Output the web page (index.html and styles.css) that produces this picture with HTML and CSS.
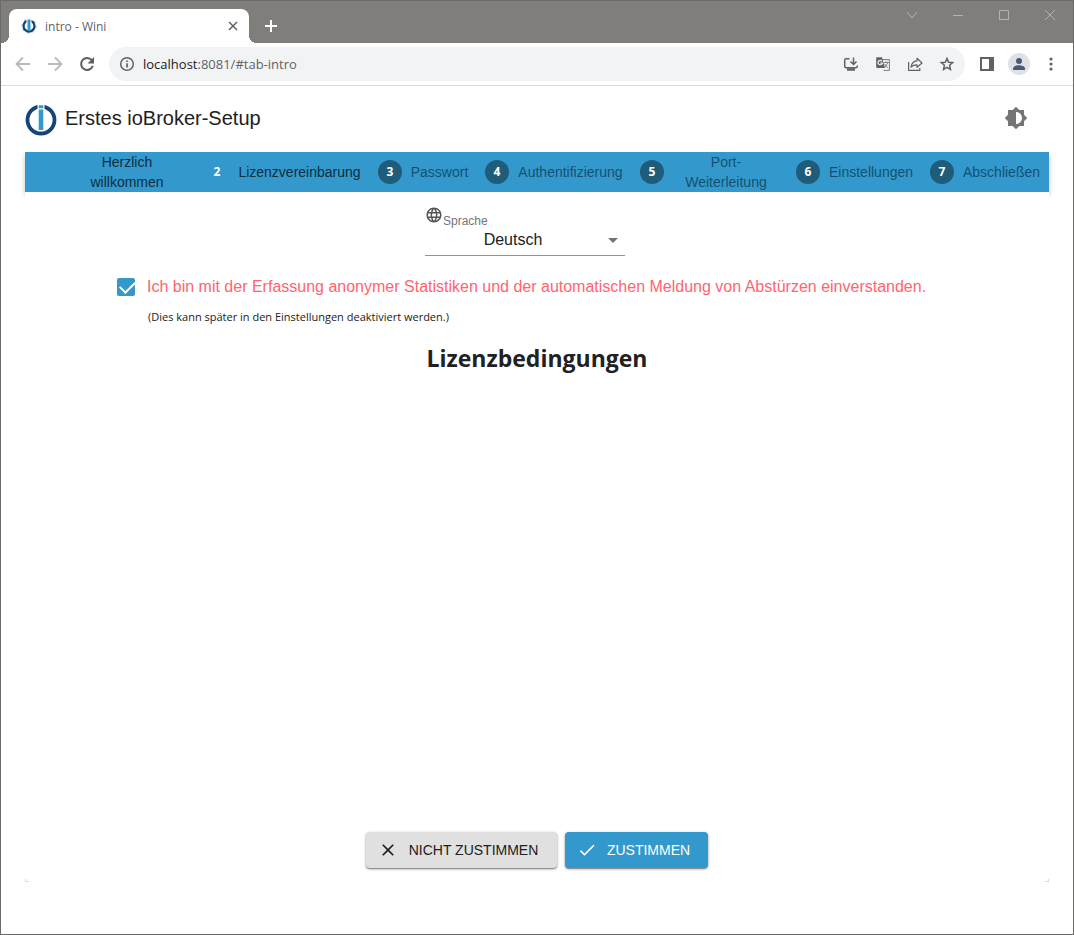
FILE: index.html
```html
<!DOCTYPE html>
<html lang="de">
<head>
<meta charset="utf-8">
<title>intro - Wini</title>
<link rel="stylesheet" href="styles.css">
</head>
<body>
<div class="window">
  <header class="tabstrip">
    <div class="tab">
      <svg class="tab-logo" width="16" height="16" viewBox="0 0 32 32"><circle cx="16" cy="16" r="14" fill="none" stroke="#c3ccd4" stroke-width="3" stroke-dasharray="4 7"/><circle cx="16" cy="16" r="11" fill="#fff" stroke="#164477" stroke-width="4.500"/><path d="M11 1h10v9H11z" fill="#fff"/><path d="M13 3h6v23h-6z" fill="#3399cc"/></svg>
      <span class="tab-title">intro - Wini</span>
      <button class="plain" aria-label="Tab schließen"><svg width="16" height="16" viewBox="0 0 16 16"><path d="M4 4l8 8M12 4l-8 8" stroke="#5f6368" stroke-width="1.500"/></svg></button>
    </div>
    <button class="plain new-tab" aria-label="Neuer Tab"><svg width="16" height="16" viewBox="0 0 16 16"><path d="M8 2v12M2 8h12" stroke="#fff" stroke-width="2"/></svg></button>
    <div class="window-controls">
      <button class="plain" aria-label="Tabs suchen"><svg width="12" height="12" viewBox="0 0 12 12"><path d="M1 3l5 6 5-6"/></svg></button>
      <button class="plain" aria-label="Minimieren"><svg width="12" height="12" viewBox="0 0 12 12"><path d="M1 6.500h10"/></svg></button>
      <button class="plain" aria-label="Maximieren"><svg width="12" height="12" viewBox="0 0 12 12"><path d="M1.500 1.500h9v9h-9z"/></svg></button>
      <button class="plain" aria-label="Schließen"><svg width="12" height="12" viewBox="0 0 12 12"><path d="M1 1l10 10M11 1L1 11"/></svg></button>
    </div>
  </header>

  <nav class="toolbar">
    <button class="plain" aria-label="Zurück"><svg width="16" height="16" viewBox="0 0 16 16" fill="none" stroke="#bababa" stroke-width="1.800"><path d="M15 8H2M8 1.500L1.500 8 8 14.500"/></svg></button>
    <button class="plain" aria-label="Vor"><svg width="16" height="16" viewBox="0 0 16 16" fill="none" stroke="#bababa" stroke-width="1.800"><path d="M1 8h13M8 1.500L14.500 8 8 14.500"/></svg></button>
    <button class="plain" aria-label="Neu laden"><svg width="16" height="16" viewBox="0 0 16 16"><path d="M12.800 4.200A6 6 0 1 0 13.800 9.800" fill="none" stroke="#5a5e63" stroke-width="2"/><path d="M15 1v6.500H8.500z" fill="#5a5e63"/></svg></button>
    <div class="address">
      <svg width="16" height="16" viewBox="0 0 16 16"><circle cx="8" cy="8" r="6.300" fill="none" stroke="#5f6368" stroke-width="1.500"/><path d="M7.200 4.500h1.700v1.600H7.200zM7.200 7.200h1.700v4.300H7.200z" fill="#5f6368"/></svg>
      <a class="url" href="#tab-intro"><span class="host">localhost</span>:8081/#tab-intro</a>
      <button class="plain" aria-label="Installieren"><svg width="16" height="16" viewBox="0 0 16 16" fill="none" stroke="#5f6368" stroke-width="1.500"><path d="M6.500 2.800H3.200q-1.500 0-1.500 1.500v6q0 1.500 1.500 1.500h9.600q1.500 0 1.500-1.500V9.500M10.500 1.500v7M7.500 5.500l3 3 3-3"/><path d="M4 13.500h8" stroke-width="2.500"/></svg></button>
      <button class="plain" aria-label="Übersetzen"><svg width="16" height="16" viewBox="0 0 16 16"><path d="M6.500 3.600h7.900v10.800H8.500" fill="none" stroke="#777b80" stroke-width="1"/><path d="M2 1.300h5L10 12H2.500q-1.300 0-1.300-1.300V2q0-.7.800-.7z" fill="#5f6368"/><path d="M7 5.200A2.200 2.200 0 1 0 7.400 7H5.200" fill="none" stroke="#f1f3f4" stroke-width="1.200"/><path d="M8.700 6.500h5M11 5.300v1.200M12.800 6.500q-.8 3-3.300 5M9.700 8q1 2.300 3.500 4" fill="none" stroke="#777b80" stroke-width=".9"/></svg></button>
      <button class="plain" aria-label="Teilen"><svg width="16" height="16" viewBox="0 0 16 16" fill="none" stroke="#5f6368" stroke-width="1.200"><path d="M1.600 6v8.300h11.200V12"/><path d="M10 2.300L15 7l-5 4.300V8.800Q6.500 8.600 4 11q.8-5.700 6-6.200z" stroke-linejoin="round"/></svg></button>
      <button class="plain" aria-label="Lesezeichen"><svg width="16" height="16" viewBox="0 0 16 16"><path d="M8 2.500l1.600 3.700 4.100.4-3.100 2.700.9 4.100L8 11.300l-3.500 2.100.9-4.100-3.100-2.700 4.100-.4z" fill="none" stroke="#5f6368" stroke-width="1.500"/></svg></button>
    </div>
    <button class="plain" aria-label="Seitenleiste"><svg width="16" height="16" viewBox="0 0 16 16"><path d="M1 1h14v14H1zm2 2v10h7V3z" fill="#5f6368" fill-rule="evenodd"/></svg></button>
    <button class="plain avatar" aria-label="Profil"><svg width="16" height="16" viewBox="0 0 16 16" fill="#4c5a75"><circle cx="8" cy="5" r="3"/><path d="M2 14v-1.500C2 10.300 5.500 9.300 8 9.300s6 1 6 3.200V14z"/></svg></button>
    <button class="plain" aria-label="Menü"><svg width="16" height="16" viewBox="0 0 16 16" fill="#5f6368"><circle cx="8" cy="3" r="1.600"/><circle cx="8" cy="8" r="1.600"/><circle cx="8" cy="13" r="1.600"/></svg></button>
  </nav>

  <main class="page">
    <div class="title-row">
      <svg width="32" height="32" viewBox="0 0 32 32"><circle cx="16" cy="16" r="13.500" fill="#fff" stroke="#164477" stroke-width="3.800"/><path d="M12.500 0h7v8h-7z" fill="#fff"/><path d="M13.700 1.300h4.600v3h-4.600zM13.700 5.500h4.600v20.500h-4.600z" fill="#3399cc"/></svg>
      <h1>Erstes ioBroker-Setup</h1>
      <button class="plain theme" aria-label="Farbschema"><svg width="24" height="24" viewBox="0 0 24 24"><path d="M20 15.310L23.310 12 20 8.690V4h-4.690L12 .69 8.690 4H4v4.690L.69 12 4 15.310V20h4.690L12 23.310 15.310 20H20zM12 18V6c3.310 0 6 2.690 6 6s-2.690 6-6 6z" fill="#757575"/></svg></button>
    </div>

    <ol class="stepper">
      <li class="step done"><span class="num" aria-hidden="true"></span><span class="label">Herzlich<br>willkommen</span></li>
      <li class="step active"><span class="num">2</span><span class="label">Lizenzvereinbarung</span></li>
      <li class="step"><span class="num">3</span><span class="label">Passwort</span></li>
      <li class="step"><span class="num">4</span><span class="label">Authentifizierung</span></li>
      <li class="step"><span class="num">5</span><span class="label">Port-<br>Weiterleitung</span></li>
      <li class="step"><span class="num">6</span><span class="label">Einstellungen</span></li>
      <li class="step"><span class="num">7</span><span class="label">Abschließen</span></li>
    </ol>

    <section class="card">
      <div class="language">
        <div class="language-head">
          <svg width="18" height="18" viewBox="0 0 24 24"><path d="M11.990 2C6.470 2 2 6.480 2 12s4.470 10 9.990 10C17.520 22 22 17.520 22 12S17.520 2 11.990 2zm6.930 6h-2.950c-.32-1.250-.78-2.450-1.380-3.560 1.840.63 3.370 1.910 4.330 3.560zM12 4.040c.83 1.200 1.480 2.530 1.910 3.960h-3.820c.43-1.430 1.080-2.760 1.910-3.960zM4.260 14C4.100 13.360 4 12.690 4 12s.1-1.360.26-2h3.380c-.08.66-.14 1.320-.14 2s.06 1.340.14 2H4.260zm.82 2h2.950c.32 1.250.78 2.450 1.380 3.560-1.840-.63-3.370-1.900-4.330-3.560zm2.950-8H5.080c.96-1.660 2.490-2.930 4.330-3.560C8.810 5.550 8.350 6.750 8.030 8zM12 19.960c-.83-1.200-1.480-2.530-1.910-3.960h3.820c-.43 1.430-1.080 2.760-1.910 3.960zM14.340 14H9.660c-.09-.66-.16-1.320-.16-2s.07-1.350.16-2h4.680c.09.65.16 1.320.16 2s-.07 1.340-.16 2zm.25 5.560c.6-1.110 1.060-2.310 1.380-3.560h2.950c-.96 1.650-2.490 2.930-4.330 3.560zM16.360 14c.08-.66.14-1.320.14-2s-.06-1.340-.14-2h3.380c.16.64.26 1.310.26 2s-.1 1.360-.26 2h-3.380z" fill="#555"/></svg>
          <label for="language">Sprache</label>
        </div>
        <div class="select">
          <select id="language"><option>Deutsch</option></select>
          <svg width="24" height="24" viewBox="0 0 24 24"><path d="M7 10l5 5 5-5z" fill="#757575"/></svg>
        </div>
      </div>

      <div class="consent">
        <input type="checkbox" id="consent" checked>
        <label for="consent">Ich bin mit der Erfassung anonymer Statistiken und der automatischen Meldung von Abstürzen einverstanden.</label>
        <p>(Dies kann später in den Einstellungen deaktiviert werden.)</p>
      </div>

      <h2>Lizenzbedingungen</h2>

      <div class="actions">
        <button class="btn decline"><svg width="20" height="20" viewBox="0 0 24 24"><path d="M19 6.410L17.590 5 12 10.590 6.410 5 5 6.410 10.590 12 5 17.590 6.410 19 12 13.410 17.590 19 19 17.590 13.410 12z" fill="currentColor"/></svg><span>NICHT ZUSTIMMEN</span></button>
        <button class="btn accept"><svg width="20" height="20" viewBox="0 0 24 24"><path d="M9 16.170L4.830 12l-1.420 1.410L9 19 21 7l-1.410-1.410z" fill="currentColor"/></svg><span>ZUSTIMMEN</span></button>
      </div>
    </section>
  </main>
</div>
</body>
</html>
```
FILE: styles.css
```css
* {
  box-sizing: border-box;
}

body {
  margin: 0;
  background: #fff;
  color: #212121;
  font-family: "Liberation Sans", Arial, sans-serif;
  font-size: 14px;
}

svg {
  display: block;
  flex: none;
}

.plain {
  display: grid;
  place-items: center;
  flex: none;
  padding: 0;
  border: 0;
  background: none;
}

.window {
  display: flex;
  flex-direction: column;
  min-height: 100vh;
  border: 1px solid #6b6a68;
}

/* Tab strip */
.tabstrip {
  display: flex;
  align-items: flex-end;
  height: 42px;
  padding-left: 8px;
  background: #807e7b;
}

.tab {
  position: relative;
  display: flex;
  align-items: center;
  gap: 8px;
  width: 240px;
  height: 34px;
  padding: 0 8px 0 12px;
  border-radius: 8px 8px 0 0;
  background: #fff;
  font-family: "Open Sans", "Noto Sans", sans-serif;
  font-size: 12px;
  color: #5f6368;
}

.tab::before,
.tab::after {
  content: "";
  position: absolute;
  bottom: 0;
  width: 8px;
  height: 8px;
}

.tab::before {
  right: 100%;
  background: radial-gradient(circle at 0 0, #807e7b 8px, #fff 8px);
}

.tab::after {
  left: 100%;
  background: radial-gradient(circle at 100% 0, #807e7b 8px, #fff 8px);
}

.tab-title {
  flex: 1;
}

.new-tab {
  height: 34px;
  margin-left: 14px;
}

.window-controls {
  display: flex;
  align-self: flex-start;
  gap: 34px;
  margin-left: auto;
  padding: 8px 17px 0 0;
}

.window-controls svg {
  fill: none;
  stroke: #b3b2b0;
}

/* Toolbar */
.toolbar {
  display: flex;
  align-items: center;
  gap: 16px;
  height: 43px;
  padding: 0 14px;
  border-bottom: 1px solid #dadce0;
}

.address {
  display: flex;
  flex: 1;
  align-items: center;
  gap: 16px;
  height: 34px;
  margin-right: -2px;
  margin-left: -2px;
  padding: 0 10px;
  border-radius: 17px;
  background: #f1f3f5;
}

.url {
  flex: 1;
  margin-left: -8px;
  font-family: "Open Sans", "Noto Sans", sans-serif;
  font-size: 13px;
  color: #5f6368;
  text-decoration: none;
}

.host {
  color: #202124;
}

.avatar {
  width: 22px;
  height: 22px;
  margin: 0 -3px;
  border-radius: 50%;
  background: #dee1e6;
}

/* Page */
.page {
  display: flex;
  flex: 1;
  flex-direction: column;
  padding: 18px 24px 52px;
}

.title-row {
  display: flex;
  align-items: flex-start;
  gap: 8px;
  padding-bottom: 16px;
}

h1 {
  flex: 1;
  margin: 0;
  font-size: 20px;
  font-weight: 400;
  line-height: 28px;
}

.theme {
  height: 28px;
  margin-right: 21px;
}

.stepper {
  display: grid;
  grid-template-columns: 172fr 173fr 107fr 155fr 156fr 134fr 127fr;
  margin: 0;
  padding: 0;
  background: #3399cc;
  box-shadow: 0 3px 5px rgba(0, 0, 0, 0.25);
  list-style: none;
}

.step {
  display: flex;
  align-items: center;
  gap: 8px;
  min-height: 40px;
  padding: 0 8px;
  line-height: 20px;
  color: #155072;
}

.step .label {
  flex: 1;
  text-align: center;
}

.step.done,
.step.active {
  color: #0c2e40;
}

.num {
  flex: none;
  width: 24px;
  border-radius: 50%;
  background: #1f5c7a;
  font-family: "Open Sans", "Noto Sans", sans-serif;
  font-size: 12px;
  font-weight: 700;
  line-height: 24px;
  text-align: center;
  color: #fff;
}

.done .num,
.active .num {
  background: none;
}

.card {
  position: relative;
  display: flex;
  flex: 1;
  flex-direction: column;
  align-items: center;
  padding: 14px 0;
  border-radius: 0 0 4px 4px;
  background: #fff;
}

.card::before,
.card::after {
  content: "";
  position: absolute;
  bottom: 0;
  width: 3px;
  height: 2px;
  border-bottom: 1px solid #ddd;
}

.card::before {
  left: 0;
  border-left: 1px solid #ddd;
}

.card::after {
  right: 0;
  border-right: 1px solid #ddd;
}

.language {
  width: 200px;
  margin-right: 24px;
}

.language-head {
  display: flex;
  align-items: flex-start;
  color: #757575;
  font-size: 12px;
}

.language-head label {
  padding-top: 8px;
  line-height: 14px;
}

.select {
  position: relative;
  border-bottom: 1px solid #949494;
}

.select select {
  display: block;
  width: 100%;
  height: 27px;
  padding: 0 24px 4px 0;
  border: 0;
  appearance: none;
  background: none;
  font: inherit;
  font-size: 16px;
  text-align: center;
  text-align-last: center;
  color: #212121;
}

.select svg {
  position: absolute;
  top: 0;
  right: 0;
  pointer-events: none;
}

.consent {
  display: grid;
  grid-template-columns: 18px 1fr;
  column-gap: 12px;
  align-items: center;
  width: 824px;
  max-width: 100%;
  margin-top: 20px;
  margin-right: 16px;
}

.consent input {
  appearance: none;
  width: 18px;
  height: 18px;
  margin: 0;
  border-radius: 2px;
  background: #3399cc;
}

.consent input:checked::before {
  content: "";
  display: block;
  width: 13px;
  height: 7px;
  margin: 3px 3px;
  border: solid #fff;
  border-width: 0 0 2px 2px;
  transform: rotate(-45deg);
}

.consent label {
  font-size: 16px;
  line-height: 22px;
  color: #ff6470;
}

.consent p {
  grid-column: 2;
  margin: 10px 0 0 1px;
  font-family: "Open Sans", "Noto Sans", sans-serif;
  font-size: 11px;
  line-height: 18px;
}

h2 {
  margin: 14px 0 auto;
  font-family: "Open Sans", "Noto Sans", sans-serif;
  font-size: 23px;
  font-weight: 700;
  line-height: 36px;
}

.actions {
  display: flex;
  gap: 8px;
}

.btn {
  display: flex;
  align-items: center;
  gap: 8px;
  height: 36px;
  padding: 0 16px 0 12px;
  border: 0;
  border-radius: 4px;
  box-shadow: 0 1px 3px rgba(0, 0, 0, 0.35), 0 1px 1px rgba(0, 0, 0, 0.3);
  font: inherit;
}

.btn span {
  flex: 1;
}

.decline {
  min-width: 191px;
  background: #e0e0e0;
  color: #212121;
}

.accept {
  min-width: 143px;
  background: #3399cc;
  color: #fff;
}
```
